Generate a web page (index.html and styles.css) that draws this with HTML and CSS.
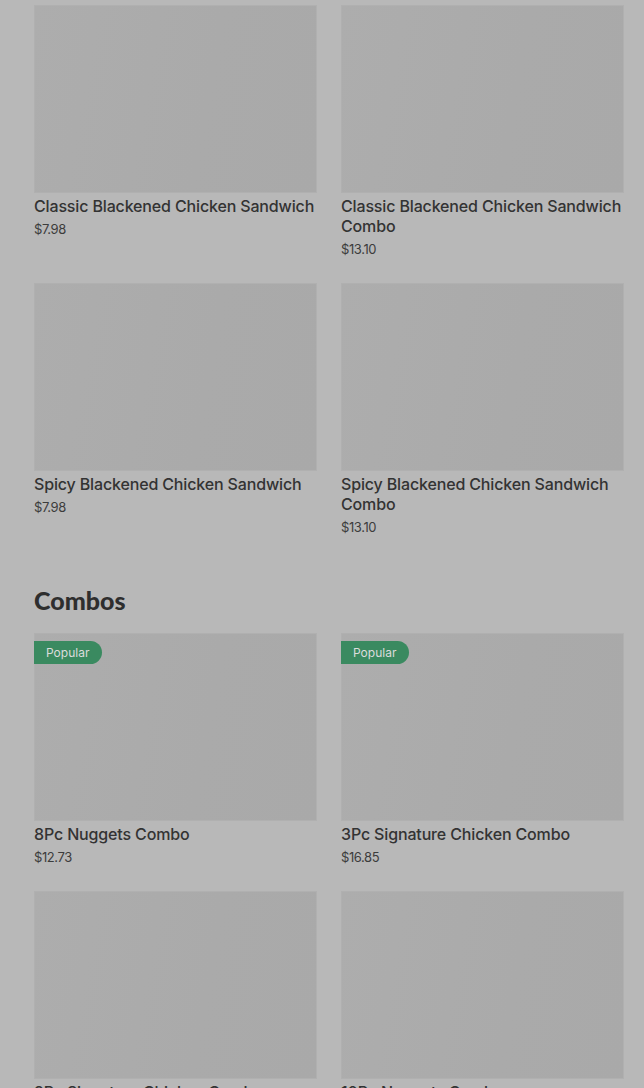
FILE: index.html
```html
<!DOCTYPE html>
<html lang="en">
<head>
    <meta charset="UTF-8">
    <meta name="viewport" content="width=device-width, initial-scale=1.0">
    <title>Menu</title>
    <link rel="stylesheet" href="styles.css">
</head>
<body>

    <div class="menu">

        <div class="grid">
            <div class="item">
                <div class="photo"></div>
                <div class="name">Classic Blackened Chicken Sandwich</div>
                <div class="price">$7.98</div>
            </div>
            <div class="item">
                <div class="photo"></div>
                <div class="name">Classic Blackened Chicken Sandwich Combo</div>
                <div class="price">$13.10</div>
            </div>
            <div class="item">
                <div class="photo"></div>
                <div class="name">Spicy Blackened Chicken Sandwich</div>
                <div class="price">$7.98</div>
            </div>
            <div class="item">
                <div class="photo"></div>
                <div class="name">Spicy Blackened Chicken Sandwich Combo</div>
                <div class="price">$13.10</div>
            </div>
        </div>

        <h2 class="section-title">Combos</h2>

        <div class="grid">
            <div class="item">
                <div class="photo">
                    <span class="badge">Popular</span>
                </div>
                <div class="name">8Pc Nuggets Combo</div>
                <div class="price">$12.73</div>
            </div>
            <div class="item">
                <div class="photo">
                    <span class="badge">Popular</span>
                </div>
                <div class="name">3Pc Signature Chicken Combo</div>
                <div class="price">$16.85</div>
            </div>
            <div class="item">
                <div class="photo"></div>
                <div class="name">2Pc Signature Chicken Combo</div>
                <div class="price">$10.98</div>
            </div>
            <div class="item">
                <div class="photo"></div>
                <div class="name">10Pc Nuggets Combo</div>
                <div class="price">$14.73</div>
            </div>
        </div>

    </div>

</body>
</html>
```

FILE: styles.css
```css
body {
    margin: 0;
    background-color: #b8b8b8;
    font-family: Inter, Roboto, "Liberation Sans", sans-serif;
    color: #303030;
}

.menu {
    padding: 5px 20px 0 34px;
}

.grid {
    display: grid;
    grid-template-columns: 283px 283px;
    column-gap: 24px;
    row-gap: 25px;
}

.photo {
    position: relative;
    height: 188px;
    background: linear-gradient(100deg, #adadad 0%, #aaaaaa 60%, #a9a9a9 100%);
    box-shadow: inset 0 0 0 1px #b0b0b0;
}

.name {
    margin-top: 3px;
    font-size: 16px;
    line-height: 20px;
    font-weight: 500;
    letter-spacing: -0.15px;
    color: #333;
}

.price {
    margin-top: 4px;
    font-size: 13px;
    line-height: 18px;
    color: #3c3c3c;
    letter-spacing: -0.4px;
}

.section-title {
    margin: 48px 0 17px;
    font-family: Lato, "Noto Sans", sans-serif;
    font-size: 25px;
    line-height: 32px;
    font-weight: 900;
    color: #2e2e2e;
}

.badge {
    position: absolute;
    top: 8px;
    left: 0;
    height: 23px;
    line-height: 23px;
    padding: 0 13px 0 12px;
    background-color: #3a8a60;
    color: #dcdcdc;
    font-size: 12px;
    border-radius: 0 12px 12px 0;
}
```
